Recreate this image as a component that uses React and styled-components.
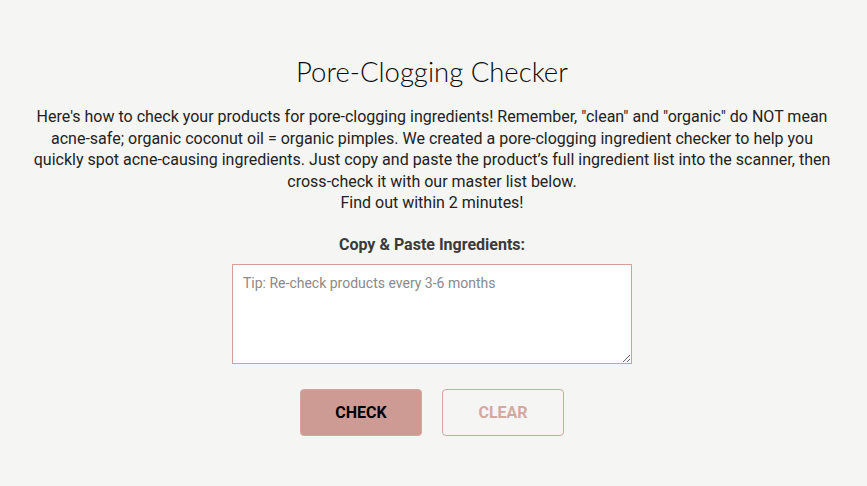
import styled, { createGlobalStyle } from "styled-components";
import { useState } from "react";

const GlobalStyle = createGlobalStyle`
    html, body{
        margin: 0;
        padding: 0;
        background-color: #F5F5F3;
    }
`;

export default function App () {
    const [ingredients, setIngredients] = useState("");

    return(
        <>
            <GlobalStyle/>
            <Page>
                <Title>Pore-Clogging Checker</Title>
                <Intro>
                    Here's how to check your products for pore-clogging ingredients! Remember, "clean" and "organic" do NOT mean acne-safe; organic coconut oil = organic pimples. We created a pore-clogging ingredient checker to help you quickly spot acne-causing ingredients. Just copy and paste the product’s full ingredient list into the scanner, then cross-check it with our master list below.
                    <br/>
                    Find out within 2 minutes!
                </Intro>
                <Label htmlFor="ingredients">Copy &amp; Paste Ingredients:</Label>
                <TextBox
                    id="ingredients"
                    value={ingredients}
                    onChange={e => setIngredients(e.target.value)}
                    placeholder="Tip: Re-check products every 3-6 months"
                />
                <Actions>
                    <Button $filled>CHECK</Button>
                    <Button onClick={() => setIngredients("")}>CLEAR</Button>
                </Actions>
            </Page>
        </>
    )
}

const Page = styled.div`
    width: 800px;
    margin: 0 auto;
    padding: 54px 3px 0 0;
    display: flex;
    flex-direction: column;
    align-items: center;
    font-family: 'Roboto', sans-serif;
`;

const Title = styled.h1`
    margin: 0;
    font-family: 'Lato', sans-serif;
    font-weight: 300;
    font-size: 27.5px;
    line-height: 36px;
    color: #0A0A0A;
`;

const Intro = styled.p`
    margin: 16px 0 0;
    text-align: center;
    font-size: 16px;
    line-height: 21.5px;
    color: #222222;
`;

const Label = styled.label`
    margin-top: 21px;
    font-weight: 700;
    font-size: 16px;
    line-height: 20px;
    color: #3A3A3A;
`;

const TextBox = styled.textarea`
    width: 400px;
    height: 100px;
    margin-top: 9px;
    box-sizing: border-box;
    border: 1px solid #D1A096;
    background: #FFFFFF;
    padding: 10px;
    font-family: inherit;
    font-size: 14px;
    color: #333333;
    outline: 0;
    &::placeholder{
        color: #8A8A8A;
    }
`;

const Actions = styled.div`
    display: flex;
    gap: 20px;
    margin-top: 25px;
`;

const Button = styled.button`
    width: 122px;
    height: 47px;
    border-radius: 4px;
    box-sizing: border-box;
    font-family: 'Roboto', sans-serif;
    font-weight: 700;
    font-size: 16px;
    cursor: pointer;
    border: 1px solid #D4A69E;
    background: ${p => p.$filled ? "#CD9B94" : "transparent"};
    color: ${p => p.$filled ? "#000000" : "#D4A8A0"};
`;
